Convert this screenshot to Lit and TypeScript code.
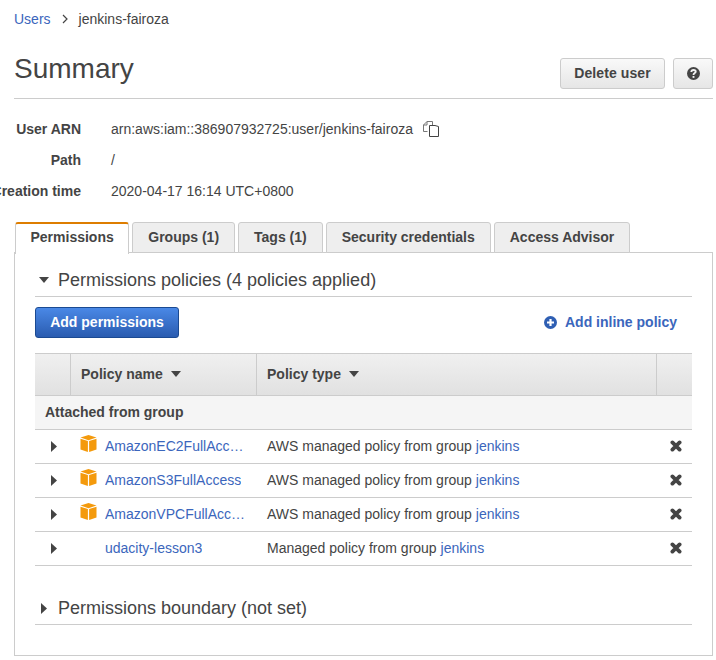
import { LitElement, html, css, svg } from 'lit';
import { customElement } from 'lit/decorators.js';

interface PolicyRow {
  name: string;
  prefix: string;
  group: string;
  managed: boolean;
}

const rows: PolicyRow[] = [
  { name: 'AmazonEC2FullAccess', prefix: 'AWS managed policy from group ', group: 'jenkins', managed: true },
  { name: 'AmazonS3FullAccess', prefix: 'AWS managed policy from group ', group: 'jenkins', managed: true },
  { name: 'AmazonVPCFullAccess', prefix: 'AWS managed policy from group ', group: 'jenkins', managed: true },
  { name: 'udacity-lesson3', prefix: 'Managed policy from group ', group: 'jenkins', managed: false },
];

const tabs = ['Permissions', 'Groups (1)', 'Tags (1)', 'Security credentials', 'Access Advisor'];

const cube = svg`<svg class="cube" width="17" height="17" viewBox="0 0 17 17">
  <path fill="#f49a0c" d="M8.500 0 16.500 2.600 8.500 5.200 0.500 2.600Z"/>
  <path fill="#f49a0c" d="M0.500 3.700 7.900 6.100V17L0.500 14.500Z"/>
  <path fill="#f49a0c" d="M16.500 3.700 9.100 6.100V17L16.500 14.500Z"/>
</svg>`;

const cross = svg`<svg width="12" height="12" viewBox="0 0 12 12">
  <path stroke="#444" stroke-width="3.800" stroke-linecap="round" d="M2.400 2.400 9.600 9.600M9.600 2.400 2.400 9.600"/>
</svg>`;

const copy = svg`<svg width="17" height="16" viewBox="0 0 17 16" fill="none" stroke="#444" stroke-width="1">
  <path stroke="#777" d="M4.500 10.500H.5V4L4 .5H9.500V4"/>
  <path stroke="#777" d="M4 .5V4H.5"/>
  <path d="M6.500 15.500V4.500H12L15.500 5.500V15.500Z"/>
</svg>`;

@customElement('app-root')
export class AppRoot extends LitElement {
  static styles = css`
    :host {
      display: block;
      height: 660px;
      overflow: hidden;
      background: #fff;
      color: #444;
      font-family: 'Liberation Sans', Arial, sans-serif;
      font-size: 14px;
    }
    a { color: #3b66bc; text-decoration: none; }
    .page { padding: 0 3px 0 14px; }

    .crumbs { display: flex; align-items: center; height: 38px; }
    .crumbs svg { margin: 0 11px; }

    .head {
      display: flex;
      justify-content: space-between;
      height: 60px;
      border-bottom: 1px solid #ccc;
    }
    h1 { margin: 13px 0 0; font-size: 28px; font-weight: 400; line-height: 36px; }
    .actions { display: flex; gap: 8px; padding-top: 20px; }
    .btn {
      display: flex;
      align-items: center;
      justify-content: center;
      box-sizing: border-box;
      height: 31px;
      padding-bottom: 1px;
      border: 1px solid #ccc;
      border-radius: 3px;
      background: linear-gradient(#f9f9f9, #e6e6e6);
      font-weight: 700;
      letter-spacing: 0.1px;
    }
    .btn.delete { width: 105px; }
    .btn.help { width: 40px; }

    .details {
      display: grid;
      grid-template-columns: 67px 1fr;
      column-gap: 30px;
      grid-auto-rows: 31px;
      margin: 14px 0 0;
      align-items: center;
    }
    .details dt {
      display: flex;
      justify-content: flex-end;
      white-space: nowrap;
      font-weight: 700;
    }
    .details dd { display: flex; align-items: center; gap: 10px; margin: 0; }

    .tabs {
      display: flex;
      align-items: flex-start;
      gap: 3px;
      height: 30px;
      margin-top: 16px;
      padding-left: 1px;
      position: relative;
      z-index: 1;
    }
    .tab {
      box-sizing: border-box;
      height: 31px;
      padding: 0 15px 1px;
      display: flex;
      align-items: center;
      justify-content: center;
      border: 1px solid #ccc;
      border-radius: 3px 3px 0 0;
      background: #eee;
      font-weight: 700;
    }
    .tab.active {
      height: 32px;
      padding: 0 14.500px 4px;
      border-top: 2px solid #dd7d00;
      border-bottom: 0;
      background: #fff;
    }

    .panel {
      box-sizing: border-box;
      height: 404px;
      border: 1px solid #ccc;
      padding: 11px 20px 0;
    }
    .section {
      display: flex;
      align-items: center;
      box-sizing: border-box;
      height: 33px;
      border-bottom: 1px solid #ccc;
      font-size: 18px;
    }
    .section .down { margin: 0 9px 0 4px; }
    .section .right { margin: 0 11px 0 6px; }

    .toolbar {
      display: flex;
      justify-content: space-between;
      align-items: center;
      margin-top: 10px;
    }
    .primary {
      box-sizing: border-box;
      width: 144px;
      height: 31px;
      padding-bottom: 1px;
      display: flex;
      align-items: center;
      justify-content: center;
      border: 1px solid #1b4a92;
      border-radius: 3px;
      background: linear-gradient(#4a88e6, #2a5cb0);
      color: #fff;
      font-weight: 700;
    }
    .inline {
      display: flex;
      align-items: center;
      gap: 8px;
      padding: 0 15px 1px 0;
      font-weight: 700;
    }

    .table { margin-top: 15px; }
    .row {
      display: grid;
      grid-template-columns: 36px 186px 1fr 35px;
      align-items: center;
      height: 34px;
      padding-bottom: 1px;
      box-sizing: border-box;
      border-bottom: 1px solid #ccc;
    }
    .row.header {
      height: 43px;
      padding-bottom: 0;
      align-items: stretch;
      background: linear-gradient(#f0f0f0, #e1e1e1);
      border: 1px solid #ccc;
      border-width: 1px 0;
      font-weight: 700;
    }
    .row.header > div {
      display: flex;
      align-items: center;
      gap: 8px;
      padding: 0 0 1px 10px;
      border-right: 1px solid #ccc;
    }
    .row.header > div:last-child { border-right: 0; }
    .group {
      display: flex;
      align-items: center;
      height: 34px;
      box-sizing: border-box;
      padding: 0 0 1px 10px;
      background: #f5f5f5;
      border-bottom: 1px solid #ccc;
      font-weight: 700;
    }
    .toggle { display: flex; justify-content: center; padding-left: 1px; }
    .name { display: flex; align-items: center; gap: 8px; padding: 0 8px 0 9px; min-width: 0; }
    .name .slot { flex: none; width: 17px; height: 17px; margin-top: -5px; }
    .name a { overflow: hidden; white-space: nowrap; text-overflow: ellipsis; }
    .type { padding-left: 10px; white-space: nowrap; }
    .remove { display: flex; justify-content: center; padding-left: 3px; }

    .boundary { margin-top: 26px; }
  `;

  private caretDown() {
    return html`<svg class="down" width="10" height="6" viewBox="0 0 10 6"><path fill="#444" d="M0 0H10L5 6Z"/></svg>`;
  }

  private caretRight() {
    return html`<svg class="right" width="6" height="11" viewBox="0 0 6 11"><path fill="#444" d="M0 0 6 5.500 0 11Z"/></svg>`;
  }

  render() {
    return html`
      <div class="page">
        <nav class="crumbs">
          <a href="#">Users</a>
          <svg width="6" height="10" viewBox="0 0 6 10" fill="none" stroke="#444" stroke-width="1.200"><path d="M1 1 5 5 1 9"/></svg>
          <span>jenkins-fairoza</span>
        </nav>

        <div class="head">
          <h1>Summary</h1>
          <div class="actions">
            <div class="btn delete">Delete user</div>
            <div class="btn help">
              <svg width="13" height="13" viewBox="0 0 14 14">
                <circle cx="7" cy="7" r="7" fill="#444"/>
                <path fill="none" stroke="#f2f2f2" stroke-width="2" d="M4.600 5.400C4.700 3.900 5.700 3.200 7 3.200 8.400 3.200 9.400 4 9.400 5.100 9.400 6.600 7 6.600 7 8.500"/>
                <rect x="6" y="9.700" width="2" height="2" fill="#f2f2f2"/>
              </svg>
            </div>
          </div>
        </div>

        <dl class="details">
          <dt>User ARN</dt>
          <dd>arn:aws:iam::386907932725:user/jenkins-fairoza ${copy}</dd>
          <dt>Path</dt>
          <dd>/</dd>
          <dt>Creation time</dt>
          <dd>2020-04-17 16:14 UTC+0800</dd>
        </dl>

        <div class="tabs">
          ${tabs.map((t, i) => html`<div class="tab ${i === 0 ? 'active' : ''}">${t}</div>`)}
        </div>

        <div class="panel">
          <div class="section">${this.caretDown()}<span>Permissions policies (4 policies applied)</span></div>

          <div class="toolbar">
            <div class="primary">Add permissions</div>
            <a class="inline" href="#">
              <svg width="13" height="13" viewBox="0 0 13 13">
                <circle cx="6.500" cy="6.500" r="6.500" fill="#2f5fb3"/>
                <path stroke="#fff" stroke-width="2.200" d="M6.500 3V10M3 6.500H10"/>
              </svg>
              Add inline policy
            </a>
          </div>

          <div class="table">
            <div class="row header">
              <div></div>
              <div>Policy name ${this.caretDown()}</div>
              <div>Policy type ${this.caretDown()}</div>
              <div></div>
            </div>
            <div class="group">Attached from group</div>
            ${rows.map(
              (r) => html`
                <div class="row">
                  <div class="toggle">${this.caretRight()}</div>
                  <div class="name">
                    <span class="slot">${r.managed ? cube : ''}</span>
                    <a href="#">${r.name}</a>
                  </div>
                  <div class="type">${r.prefix}<a href="#">${r.group}</a></div>
                  <div class="remove">${cross}</div>
                </div>
              `
            )}
          </div>

          <div class="section boundary">${this.caretRight()}<span>Permissions boundary (not set)</span></div>
        </div>
      </div>
    `;
  }
}
